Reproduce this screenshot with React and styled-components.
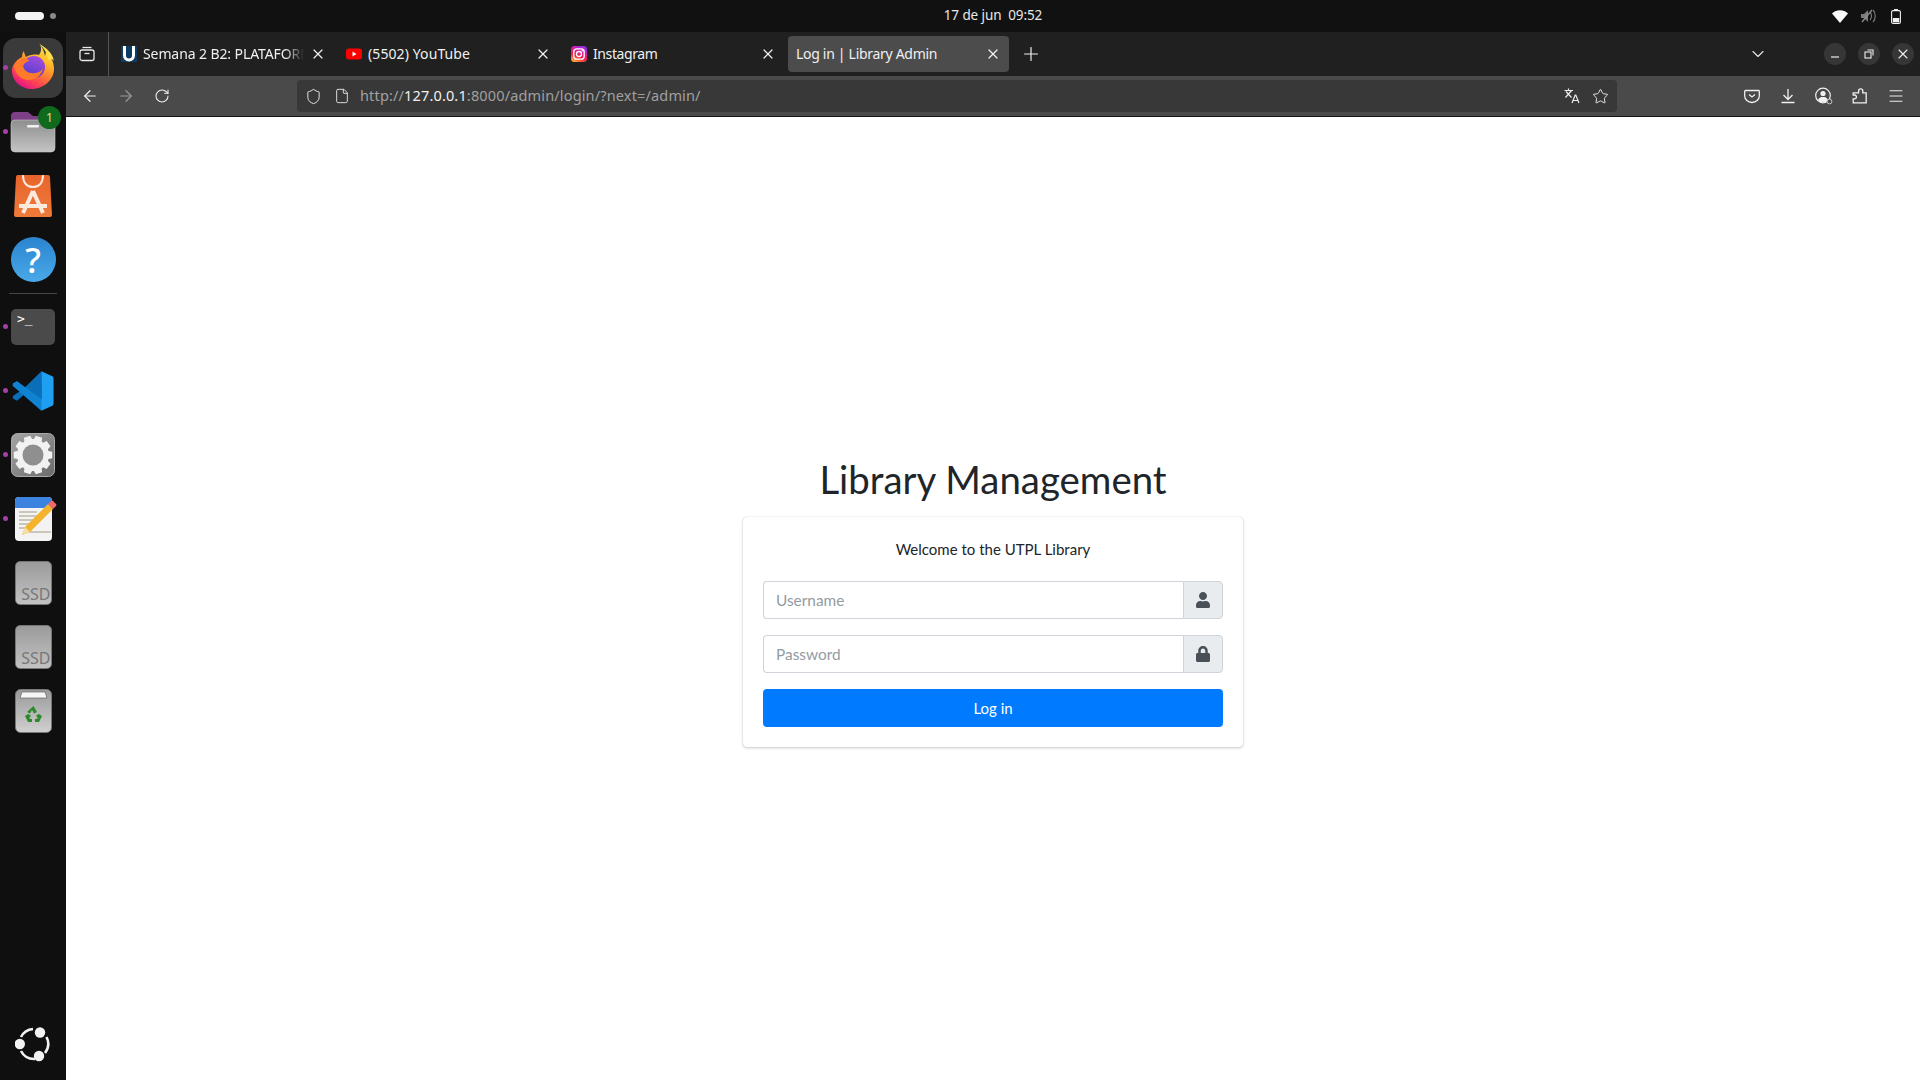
import React from 'react';
import styled, { createGlobalStyle } from 'styled-components';
import { FaUser, FaLock } from 'react-icons/fa';
import { ArrowLeft, ArrowRight, RotateCw, Shield, File, Star, Menu, Plus, X, ChevronDown } from 'lucide-react';

const GlobalStyle = createGlobalStyle`
  html, body { margin: 0; height: 100%; overflow: hidden; background: #fff; }
  * { box-sizing: border-box; }
`;

const chromeFont = `"Noto Sans", "Open Sans", sans-serif`;
const pageFont = `Lato, "Noto Sans", sans-serif`;

//whole screen
const Screen = styled.div`
  height: 100vh;
  display: flex;
  flex-direction: column;
  background: #0f0f0f;
`;

const TopBar = styled.header`
  height: 32px;
  flex: none;
  display: grid;
  grid-template-columns: 198px 1fr 132px;
  align-items: center;
  background: #111;
  color: #e8e8e8;
  font: 13.5px ${chromeFont};
`;

const Workspaces = styled.div`
  display: flex;
  align-items: center;
  gap: 6px;
  padding-left: 15px;
`;

const Pill = styled.span`
  width: 29px;
  height: 8px;
  border-radius: 4px;
  background: #f4f4f4;
`;

const SmallDot = styled.span`
  width: 6px;
  height: 6px;
  border-radius: 50%;
  background: #8a8a8a;
`;

const Clock = styled.div`
  text-align: center;
  letter-spacing: -0.1px;
  margin-top: -2px;
`;

const Status = styled.div`
  display: flex;
  justify-content: flex-end;
  align-items: center;
  gap: 12px;
  padding-right: 16px;
`;

const Body = styled.div`
  flex: 1;
  min-height: 0;
  display: flex;
`;

//left dock
const Dock = styled.nav`
  width: 66px;
  flex: none;
  display: flex;
  flex-direction: column;
  padding: 4px 0;
`;

const DockItem = styled.div`
  position: relative;
  height: 64px;
  flex: none;
  display: flex;
  align-items: center;
  justify-content: center;
  &:last-child { margin-top: auto; }
`;

const RunDot = styled.span`
  position: absolute;
  left: 3px;
  top: 29px;
  width: 5px;
  height: 5px;
  border-radius: 50%;
  background: #a83fa8;
`;

const ActiveTile = styled.div`
  width: 60px;
  height: 60px;
  border-radius: 13px;
  background: #3a3a3a;
  display: flex;
  align-items: center;
  justify-content: center;
  padding-bottom: 2px;
`;

const Badge = styled.span`
  position: absolute;
  right: 5px;
  top: 6px;
  width: 23px;
  height: 23px;
  border-radius: 50%;
  background: #0f6a1d;
  color: #e4d98c;
  font: 12px/23px ${chromeFont};
  text-align: center;
`;

const DockSep = styled.div`
  height: 3px;
  flex: none;
  margin: 0 9px;
  display: flex;
  align-items: center;
  &::before { content: ''; flex: 1; height: 1px; background: #444; }
`;

const HelpIcon = styled.div`
  width: 45px;
  height: 45px;
  border-radius: 50%;
  background: linear-gradient(#2a84cf, #4aa9e9);
  color: #fff;
  font: 500 35px/45px ${chromeFont};
  text-align: center;
  margin-top: -2px;
`;

const TerminalIcon = styled.div`
  width: 44px;
  height: 36px;
  border-radius: 5px;
  background: #4a4a4a;
  color: #fff;
  font: 13px/14px "DejaVu Sans Mono", monospace;
  padding: 3px 0 0 6px;
`;

const DriveIcon = styled.div`
  width: 37px;
  height: 44px;
  border-radius: 5px;
  background: linear-gradient(#9b9b9b, #c2c2c2);
  border: 1px solid #777;
  color: #777;
  font: 16px/20px ${chromeFont};
  text-align: right;
  padding-top: 22px;
  white-space: nowrap;
`;

//browser window
const Browser = styled.main`
  flex: 1;
  min-width: 0;
  display: flex;
  flex-direction: column;
`;

const TabBar = styled.div`
  height: 44px;
  flex: none;
  display: flex;
  align-items: center;
  background: #202020;
  color: #f0f0f0;
  font: 14px ${chromeFont};
`;

const ViewButton = styled.div`
  width: 43px;
  height: 44px;
  flex: none;
  display: flex;
  align-items: center;
  justify-content: center;
  border-right: 1px solid #555;
  margin-right: 4px;
`;

const TabSlot = styled.div`
  width: 225px;
  flex: none;
  padding-right: 4px;
`;

const Tab = styled.div`
  height: 36px;
  padding: 0 8px;
  display: flex;
  align-items: center;
  gap: 6px;
  border-radius: 4px;
  background: ${(p) => (p.$active ? '#4c4c4c' : 'transparent')};
`;

const TabTitle = styled.span`
  flex: 1;
  min-width: 0;
  overflow: hidden;
  white-space: nowrap;
  letter-spacing: ${(p) => p.$tracking}px;
  margin-top: -1px;
  ${(p) => p.$fade && `mask-image: linear-gradient(to right, #000 88%, transparent);`}
`;

const NewTab = styled.div`
  width: 36px;
  display: flex;
  justify-content: center;
`;

const TabsMenu = styled.div`
  margin-left: auto;
  margin-right: 56px;
  display: flex;
`;

const WindowControls = styled.div`
  display: flex;
  gap: 12px;
  padding-right: 6px;
`;

const WinButton = styled.div`
  width: 22px;
  height: 22px;
  border-radius: 50%;
  background: #363636;
  display: flex;
  align-items: center;
  justify-content: center;
`;

const NavBar = styled.div`
  height: 41px;
  flex: none;
  display: flex;
  align-items: flex-start;
  padding: 4px 6px 0;
  background: #4a4a4a;
  border-bottom: 1px solid #111;
`;

const NavButtons = styled.div`
  display: flex;
  margin-right: 117px;
`;

const ToolButton = styled.div`
  width: 36px;
  height: 32px;
  display: flex;
  align-items: center;
  justify-content: center;
  color: ${(p) => (p.$dim ? '#9a9a9a' : '#f0f0f0')};
`;

const UrlBar = styled.div`
  width: 1320px;
  height: 32px;
  padding: 0 8px;
  display: flex;
  align-items: center;
  gap: 12px;
  border-radius: 4px;
  background: #383838;
  color: #e6e6e6;
`;

const UrlText = styled.div`
  flex: 1;
  margin: -2px 0 0 -2px;
  font: 14.5px ${chromeFont};
  letter-spacing: 0.15px;
  color: #a0a0a0;
  white-space: nowrap;
`;

const UrlHost = styled.span`
  color: #f0f0f0;
`;

const ToolIcons = styled.div`
  margin-left: auto;
  display: flex;
`;

//login page
const Page = styled.section`
  flex: 1;
  background: #fff;
  display: flex;
  flex-direction: column;
  align-items: center;
  justify-content: center;
  font: 15px/24px ${pageFont};
  color: #212529;
`;

const LoginBox = styled.div`
  width: 500px;
`;

const Logo = styled.h1`
  margin: 0 0 9px;
  font: 400 38.4px/58px ${pageFont};
  text-align: center;
`;

const Card = styled.form`
  border-radius: 4px;
  background: #fff;
  box-shadow: 0 0 1px rgba(0, 0, 0, 0.2), 0 1px 3px rgba(0, 0, 0, 0.2);
  padding: 20px;
`;

const Welcome = styled.p`
  margin: 0 0 20px;
  text-align: center;
`;

const InputGroup = styled.div`
  display: flex;
  height: 38px;
  margin-bottom: 16px;
`;

const Input = styled.input`
  flex: 1;
  min-width: 0;
  padding: 0 12px;
  border: 1px solid #ced4da;
  border-right: 0;
  border-radius: 4px 0 0 4px;
  font: 15.4px ${pageFont};
  color: #495057;
  outline: none;
  &::placeholder { color: #939ba2; opacity: 1; }
`;

const Addon = styled.div`
  width: 40px;
  display: flex;
  align-items: center;
  justify-content: center;
  border: 1px solid #ced4da;
  border-radius: 0 4px 4px 0;
  background: #e9ecef;
  color: #495057;
  font-size: 16px;
`;

const LoginButton = styled.button`
  display: block;
  width: 100%;
  height: 38px;
  border: 0;
  border-radius: 4px;
  background: #007bff;
  color: #fff;
  font: 15px ${pageFont};
`;

//icons drawn by hand
const FirefoxIcon = () => (
  <svg width="44" height="46" viewBox="0 0 44 46">
    <defs>
      <linearGradient id="ffBody" x1="0.85" y1="0.02" x2="0.3" y2="0.98">
        <stop offset="0" stopColor="#ffe94a" />
        <stop offset="0.3" stopColor="#ffbd2b" />
        <stop offset="0.58" stopColor="#ff7a32" />
        <stop offset="0.82" stopColor="#ff3d5a" />
        <stop offset="1" stopColor="#e31587" />
      </linearGradient>
      <linearGradient id="ffGlobe" x1="0.7" y1="0" x2="0.3" y2="1">
        <stop offset="0" stopColor="#a54ee0" />
        <stop offset="1" stopColor="#4f3cc9" />
      </linearGradient>
    </defs>
    <path d="M29 0c2 5 1 8-1 11-5-1-10 0-13 2-1-2-2-4-2-6-1 1-2 3-2 6C5 16 1 21 1 27c0 10 9 18 20 18s22-9 22-20c0-8-4-14-8-17l-1 4C33 7 31 3 29 0z" fill="url(#ffBody)" />
    <circle cx="23" cy="23" r="11" fill="url(#ffGlobe)" />
    <path d="M3 22c2-5 6-8 11-8l5 3c-3 0-6 2-7 5 1 5 6 8 12 7 4 0 7-3 8-5-1 7-7 12-14 12C10 36 4 30 3 22z" fill="#ff7a2b" />
    <path d="M28 0c5 4 9 10 9 16 2-1 4-2 6 1-1-7-8-14-15-17z" fill="#ffe04a" />
  </svg>
);

const FilesIcon = () => (
  <svg width="46" height="42" viewBox="0 0 46 42">
    <defs>
      <linearGradient id="fileFront" x1="0" y1="0" x2="0" y2="1">
        <stop offset="0" stopColor="#8e8e8e" />
        <stop offset="1" stopColor="#c4c4c4" />
      </linearGradient>
    </defs>
    <path d="M1 5a4 4 0 0 1 4-4h13l5 4h18a4 4 0 0 1 4 4v8H1z" fill="#7d3f85" />
    <rect x="1" y="9" width="44" height="32" rx="4" fill="url(#fileFront)" stroke="#c8c8c8" strokeWidth="0.6" />
    <rect x="17" y="14" width="12" height="2.5" rx="1" fill="#f1f1f1" />
  </svg>
);

const StoreIcon = () => (
  <svg width="38" height="44" viewBox="0 0 38 44">
    <defs>
      <linearGradient id="bag" x1="0" y1="0" x2="0" y2="1">
        <stop offset="0" stopColor="#e8642c" />
        <stop offset="1" stopColor="#ee7b3a" />
      </linearGradient>
    </defs>
    <path d="M4 1h30a2 2 0 0 1 2 2l2 38a2 2 0 0 1-2 2H2a2 2 0 0 1-2-2L2 3a2 2 0 0 1 2-2z" fill="url(#bag)" />
    <path d="M9 1c0 8 4 12 10 12s10-4 10-12" fill="none" stroke="#fbe9dd" strokeWidth="2" />
    <path d="M19 17L9 39M19 17l10 22M5 32h28" fill="none" stroke="#fbe9dd" strokeWidth="4" />
  </svg>
);

const VscodeIcon = () => (
  <svg width="42" height="42" viewBox="0 0 100 100">
    <path d="M70 3L30 42 12 27 2 32v6l18 12L2 62v6l10 5 18-15 40 39z" fill="#0a6fb8" />
    <path d="M12 27L2 32v6l68 59 4-25z" fill="#0f83d2" />
    <path d="M70 3l26 12q3 2 3 5v60q0 3-3 5L70 97z" fill="#1f9ff2" />
  </svg>
);

const gearPath = () => {
  // gear outline, computed from its teeth
  const pts = [];
  for (let i = 0; i < 10; i++) {
    const a = (i / 10) * Math.PI * 2;
    const w = 0.17;
    [[16, a - w * 1.5], [19.5, a - w], [19.5, a + w], [16, a + w * 1.5]].forEach(([r, t]) => {
      pts.push(`${(22 + r * Math.cos(t)).toFixed(2)} ${(22 + r * Math.sin(t)).toFixed(2)}`);
    });
  }
  return `M${pts.join('L')}Z`;
};

const SettingsIcon = () => (
  <svg width="44" height="44" viewBox="0 0 44 44">
    <defs>
      <linearGradient id="setBg" x1="0" y1="0" x2="1" y2="1">
        <stop offset="0" stopColor="#a5a5a5" />
        <stop offset="1" stopColor="#6a6a6a" />
      </linearGradient>
    </defs>
    <rect x="0.5" y="0.5" width="43" height="43" rx="6" fill="url(#setBg)" stroke="#aaa" />
    <path d={gearPath()} fill="#f2f2f2" />
    <circle cx="22" cy="22" r="10.5" fill="#8f8f8f" />
  </svg>
);

const EditorIcon = () => (
  <svg width="48" height="44" viewBox="0 0 48 44">
    <rect x="6" y="0" width="37" height="44" rx="4" fill="#f3f3f3" />
    <path d="M6 11V4a4 4 0 0 1 4-4h29a4 4 0 0 1 4 4v7z" fill="#3b83de" />
    <path d="M10 15h18M10 19h18M10 23h14M10 27h12M10 31h10M14 35h28" stroke="#bdb8a8" strokeWidth="1.6" />
    <path d="M13 38l3-8 23-23 5 5-23 23z" fill="#f4b32c" />
    <path d="M13 38l3-8 5 5z" fill="#f4dca6" />
    <path d="M39 7l3-3a1.5 1.5 0 0 1 2 0l3 3a1.5 1.5 0 0 1 0 2l-3 3z" fill="#ee6a6a" />
  </svg>
);

const TrashIcon = () => (
  <svg width="37" height="44" viewBox="0 0 37 44">
    <defs>
      <linearGradient id="binBg" x1="0" y1="0" x2="0" y2="1">
        <stop offset="0" stopColor="#9a9a9a" />
        <stop offset="1" stopColor="#d0d0d0" />
      </linearGradient>
    </defs>
    <rect x="0.5" y="0.5" width="36" height="43" rx="5" fill="url(#binBg)" stroke="#777" />
    <path d="M5 9l2-6h23l2 6z" fill="#f6f6f6" stroke="#555" strokeWidth="0.6" />
    <path d="M18.5 17l3.5 6-3 1.5-2-3.5-2 3.5-3-1.5zM27 27l-3 6h-4v-3l3-.5-2-3 3-1.5zM10 27l3 6h4v-3l-3-.5 2-3-3-1.5z" fill="#2c8a2c" />
  </svg>
);

const UbuntuIcon = () => (
  <svg width="36" height="36" viewBox="0 0 36 36">
    <g fill="none" stroke="#f2f2f2" strokeWidth="2.6">
      <path d="M6 11A15 15 0 0 1 18 3" />
      <path d="M31.5 11A15 15 0 0 1 30 27" />
      <path d="M20 33A15 15 0 0 1 6 25" />
    </g>
    <g fill="#f2f2f2">
      <circle cx="25" cy="6.5" r="5.2" />
      <circle cx="4.8" cy="18" r="5.2" />
      <circle cx="24" cy="30" r="5.2" />
    </g>
  </svg>
);

const ViewIcon = () => (
  <svg width="16" height="16" viewBox="0 0 16 16" fill="none" stroke="#e8e8e8" strokeWidth="1.3">
    <path d="M3.5 1.5h9" />
    <rect x="1" y="4" width="14" height="10.5" rx="2" />
    <path d="M5.5 7.5h5" />
  </svg>
);

const UtplFavicon = () => (
  <svg width="16" height="16" viewBox="0 0 16 16" style={{ flex: 'none' }}>
    <rect width="16" height="16" fill="#0d3b66" />
    <path d="M3.5 0v9.5a4.5 4.5 0 0 0 9 0V0" fill="none" stroke="#fff" strokeWidth="3" />
  </svg>
);

const YoutubeFavicon = () => (
  <svg width="16" height="16" viewBox="0 0 16 16" style={{ flex: 'none' }}>
    <rect y="2.5" width="16" height="11" rx="3" fill="#f00" />
    <path d="M6.5 5.5l4 2.5-4 2.5z" fill="#fff" />
  </svg>
);

const InstagramFavicon = () => (
  <svg width="16" height="16" viewBox="0 0 16 16" style={{ flex: 'none' }}>
    <defs>
      <linearGradient id="ig" x1="0.1" y1="1" x2="0.6" y2="0">
        <stop offset="0" stopColor="#fdc23d" />
        <stop offset="0.4" stopColor="#f5213f" />
        <stop offset="0.75" stopColor="#d81bb0" />
        <stop offset="1" stopColor="#9a2be0" />
      </linearGradient>
    </defs>
    <rect width="16" height="16" rx="3.5" fill="url(#ig)" />
    <rect x="2.8" y="2.8" width="10.4" height="10.4" rx="3" fill="none" stroke="#fff" strokeWidth="1.3" />
    <circle cx="8" cy="8" r="2.5" fill="none" stroke="#fff" strokeWidth="1.3" />
    <circle cx="11.2" cy="4.8" r="0.8" fill="#fff" />
  </svg>
);

const TranslateIcon = () => (
  <svg width="16" height="16" viewBox="0 0 16 16" fill="none" stroke="#ececec" strokeWidth="1.2">
    <path d="M0.5 2.5h8.5M4.5 0.5v2M1.5 9.5l6-7M2 3.5l5.5 6" />
    <path d="M8 15l3.2-8h.6L15 15M9.2 12.5h4.6" />
  </svg>
);

const PocketIcon = () => (
  <svg width="16" height="16" viewBox="0 0 16 16" fill="none" stroke="#f0f0f0" strokeWidth="1.3">
    <path d="M1.5 2.5h13a.8.8 0 0 1 .8.8V8a7.3 6.5 0 0 1-14.6 0V3.3a.8.8 0 0 1 .8-.8z" />
    <path d="M5 6.5L8 9l3-2.5" />
  </svg>
);

const DownloadIcon = () => (
  <svg width="16" height="16" viewBox="0 0 16 16" fill="none" stroke="#f0f0f0" strokeWidth="1.3">
    <path d="M8 1v10M3.5 7L8 11.5 12.5 7M1.5 14.5h13" />
  </svg>
);

const AccountIcon = () => (
  <svg width="18" height="18" viewBox="0 0 18 18">
    <circle cx="8" cy="8.5" r="7.3" fill="none" stroke="#f0f0f0" strokeWidth="1.2" />
    <circle cx="8" cy="6.5" r="2.6" fill="#f0f0f0" />
    <path d="M3 13c1-2.5 3-3 5-3s4 .5 5 3l-2 2H5z" fill="#f0f0f0" />
    <circle cx="14.5" cy="14.5" r="2.4" fill="#4a4a4a" stroke="#c8c8c8" strokeWidth="1" />
  </svg>
);

const PuzzleIcon = () => (
  <svg width="16" height="16" viewBox="0 0 16 16" fill="none" stroke="#f0f0f0" strokeWidth="1.3">
    <path d="M3 4.8h3.6V3a2.1 2.1 0 0 1 4.2 0v1.8h3.4v10H1.2v-4h1.3a1.9 1.9 0 0 0 0-3.8H1.2V4.8z" />
  </svg>
);

const WifiIcon = () => (
  <svg width="16" height="13" viewBox="0 0 16 13">
    <path d="M0 3.5C4.5-.8 11.5-.8 16 3.5L8 13z" fill="#fafafa" />
  </svg>
);

const MutedIcon = () => (
  <svg width="16" height="14" viewBox="0 0 16 14">
    <path d="M1 5h3l4-4v12L4 9H1z" fill="#7c7c7c" />
    <path d="M10 3c2 2 2 6 0 8M13 1c3 3 3 9 0 12" fill="none" stroke="#7c7c7c" strokeWidth="1.1" />
    <path d="M2 13L12 1" stroke="#8e8e8e" strokeWidth="1.3" />
  </svg>
);

const BatteryIcon = () => (
  <svg width="16" height="15" viewBox="-3 0 16 15">
    <rect x="0.6" y="1.6" width="8.8" height="12.8" rx="1.5" fill="none" stroke="#f0f0f0" strokeWidth="1.1" />
    <rect x="3" y="0" width="4" height="1.6" fill="#f0f0f0" />
    <rect x="1.8" y="9" width="6.4" height="4.2" fill="#f0f0f0" />
  </svg>
);

const MinimizeIcon = () => (
  <svg width="10" height="10" viewBox="0 0 10 10"><path d="M1 8h8" stroke="#eee" strokeWidth="1.2" /></svg>
);

const RestoreIcon = () => (
  <svg width="10" height="10" viewBox="0 0 10 10" fill="none" stroke="#eee" strokeWidth="1.1">
    <rect x="1" y="3" width="6" height="6" />
    <path d="M3.5 1H9v5.5" />
  </svg>
);

const tabs = [
  { title: 'Semana 2 B2: PLATAFORMAS', icon: <UtplFavicon />, fade: true, tracking: -0.1 },
  { title: '(5502) YouTube', icon: <YoutubeFavicon />, tracking: 0.1 },
  { title: 'Instagram', icon: <InstagramFavicon />, tracking: -0.4 },
  { title: 'Log in | Library Admin', active: true, tracking: -0.3 },
];

const dockItems = [
  { icon: <ActiveTile><FirefoxIcon /></ActiveTile>, running: true },
  { icon: <FilesIcon />, running: true, badge: '1' },
  { icon: <StoreIcon /> },
  { icon: <HelpIcon>?</HelpIcon> },
  { sep: true },
  { icon: <TerminalIcon>&gt;_</TerminalIcon>, running: true },
  { icon: <VscodeIcon />, running: true },
  { icon: <SettingsIcon />, running: true },
  { icon: <EditorIcon />, running: true },
  { icon: <DriveIcon>SSD</DriveIcon> },
  { icon: <DriveIcon>SSD</DriveIcon> },
  { icon: <TrashIcon /> },
  { icon: <UbuntuIcon /> },
];

const App = () => (
  <Screen>
    <GlobalStyle />
    <TopBar>
      <Workspaces><Pill /><SmallDot /></Workspaces>
      <Clock>17 de jun&nbsp;&nbsp;09:52</Clock>
      <Status><WifiIcon /><MutedIcon /><BatteryIcon /></Status>
    </TopBar>
    <Body>
      <Dock>
        {dockItems.map((item, i) =>
          item.sep ? (
            <DockSep key={i} />
          ) : (
            <DockItem key={i}>
              {item.running && <RunDot />}
              {item.icon}
              {item.badge && <Badge>{item.badge}</Badge>}
            </DockItem>
          )
        )}
      </Dock>
      <Browser>
        <TabBar>
          <ViewButton><ViewIcon /></ViewButton>
          {tabs.map((tab) => (
            <TabSlot key={tab.title}>
              <Tab $active={tab.active}>
                {tab.icon}
                <TabTitle $fade={tab.fade} $tracking={tab.tracking}>{tab.title}</TabTitle>
                <X size={16} strokeWidth={1.8} color="#f0f0f0" />
              </Tab>
            </TabSlot>
          ))}
          <NewTab><Plus size={22} strokeWidth={1.3} color="#f0f0f0" /></NewTab>
          <TabsMenu><ChevronDown size={20} strokeWidth={1.4} color="#e0e0e0" /></TabsMenu>
          <WindowControls>
            <WinButton><MinimizeIcon /></WinButton>
            <WinButton><RestoreIcon /></WinButton>
            <WinButton><X size={16} strokeWidth={1.6} color="#eee" /></WinButton>
          </WindowControls>
        </TabBar>
        <NavBar>
          <NavButtons>
            <ToolButton><ArrowLeft size={18} strokeWidth={1.6} /></ToolButton>
            <ToolButton $dim><ArrowRight size={18} strokeWidth={1.6} /></ToolButton>
            <ToolButton><RotateCw size={16} strokeWidth={1.6} /></ToolButton>
          </NavButtons>
          <UrlBar>
            <Shield size={17} strokeWidth={1.4} />
            <File size={16} strokeWidth={1.4} />
            <UrlText>http://<UrlHost>127.0.0.1</UrlHost>:8000/admin/login/?next=/admin/</UrlText>
            <TranslateIcon />
            <Star size={17} strokeWidth={1.4} />
          </UrlBar>
          <ToolIcons>
            <ToolButton><PocketIcon /></ToolButton>
            <ToolButton><DownloadIcon /></ToolButton>
            <ToolButton><AccountIcon /></ToolButton>
            <ToolButton><PuzzleIcon /></ToolButton>
            <ToolButton><Menu size={18} strokeWidth={1.3} /></ToolButton>
          </ToolIcons>
        </NavBar>
        <Page>
          <LoginBox>
            <Logo>Library Management</Logo>
            <Card onSubmit={(e) => e.preventDefault()}>
              <Welcome>Welcome to the UTPL Library</Welcome>
              <InputGroup>
                <Input type="text" placeholder="Username" />
                <Addon><FaUser /></Addon>
              </InputGroup>
              <InputGroup>
                <Input type="password" placeholder="Password" />
                <Addon><FaLock /></Addon>
              </InputGroup>
              <LoginButton type="submit">Log in</LoginButton>
            </Card>
          </LoginBox>
        </Page>
      </Browser>
    </Body>
  </Screen>
);

export default App;
